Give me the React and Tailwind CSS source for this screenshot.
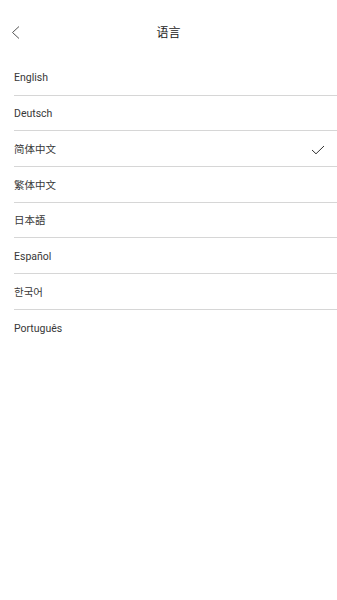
const languages = [
  { name: 'English' },
  { name: 'Deutsch' },
  { name: '简体中文', selected: true },
  { name: '繁体中文' },
  { name: '日本語' },
  { name: 'Español' },
  { name: '한국어' },
  { name: 'Português' },
]

export default function App() {
  return (
    <div
      className="min-h-[600px] w-full bg-white text-[#383838]"
      style={{ fontFamily: "Roboto, 'Noto Sans CJK SC', 'Noto Sans CJK JP', 'Noto Sans CJK KR', sans-serif" }}
    >
      {/* Header */}
      <div className="relative flex h-[60px] items-center justify-center pt-[6px]">
        <button className="absolute left-[10px] top-[25px] p-0">
          <svg width="12" height="15" viewBox="0 0 12 15" fill="none">
            <path d="M9 1.5 L2.5 7.5 L9 13.5" stroke="#555" strokeWidth="1" />
          </svg>
        </button>
        <h1 className="text-[12px] font-normal text-[#222]">语言</h1>
      </div>

      {/* Language list */}
      <ul className="ml-[14px]">
        {languages.map((lang, i) => (
          <li
            key={lang.name}
            className={
              'flex h-[35.7px] items-center justify-between pt-[2px] pr-[12px] text-[10.5px] ' +
              (i < languages.length - 1 ? 'border-b border-[#d6d6d6]' : '')
            }
          >
            <span>{lang.name}</span>
            {lang.selected && (
              <svg width="14" height="10" viewBox="0 0 14 10" fill="none">
                <path d="M1 5 L5 8.8 L13 1" stroke="#333" strokeWidth="1" />
              </svg>
            )}
          </li>
        ))}
      </ul>
    </div>
  )
}
